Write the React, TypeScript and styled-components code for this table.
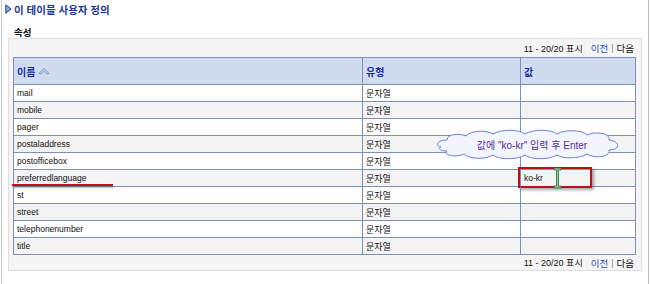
import React from "react";
import styled, { createGlobalStyle } from "styled-components";

const FONT = `"Liberation Sans", "Noto Sans CJK KR", sans-serif`;

const GlobalStyle = createGlobalStyle`
  html, body { margin: 0; padding: 0; background: #ffffff; }
  body { font-family: ${FONT}; color: #000; }
  * { box-sizing: border-box; }
`;

const Page = styled.div`
  width: 650px;
  height: 284px;
  display: flex;
  background: #fff;
`;

const Frame = styled.div`
  margin-left: 1px;
  width: 648px;
  height: 284px;
  border-left: 1px solid #c3cbd8;
  border-right: 1px solid #bdbdbd;
  display: flex;
  flex-direction: column;
`;

const TitleRow = styled.div`
  display: flex;
  align-items: center;
  gap: 2px;
  height: 14px;
  margin: 2px 0 0 3px;
  font: bold 10.5px ${FONT};
  color: #1f3a94;
  white-space: nowrap;
`;

const SectionLabel = styled.div`
  height: 12px;
  line-height: 12px;
  margin: 9px 0 0 12px;
  font: bold 9.5px ${FONT};
  color: #111;
`;

const Panel = styled.div`
  margin: 1px 0 0 6px;
  width: 634px;
  border: 1px solid #dedede;
  background: #f5f5f5;
  padding: 0 5px 0 4px;
  display: flex;
  flex-direction: column;
`;

const Pager = styled.div<{ $h: number }>`
  height: ${(p) => p.$h}px;
  display: flex;
  justify-content: flex-end;
  align-items: center;
  padding-right: 2px;
  color: #111;
  white-space: nowrap;
`;

const PagerCount = styled.span`
  font-size: 9px;
  margin-right: 3px;
`;

const PagerWord = styled.span<{ $link?: boolean }>`
  font-size: 9.5px;
  color: ${(p) => (p.$link ? "#2d4fb3" : "#111")};
`;

const Sep = styled.span`
  color: #8a8a8a;
  font-size: 9px;
  margin: 0 3px;
`;

const Table = styled.div`
  border: 1px solid #7b91b6;
  background: #fff;
  display: flex;
  flex-direction: column;
`;

const Row = styled.div<{ $head?: boolean; $alt?: boolean; $last?: boolean }>`
  display: grid;
  grid-template-columns: 348px 158px 1fr;
  height: ${(p) => (p.$head ? 27 : p.$last ? 16 : 17)}px;
  border-bottom: ${(p) => (p.$last ? "none" : "1px solid #7b91b6")};
  background: ${(p) => (p.$head ? "#cfdbee" : p.$alt ? "#f3f3f3" : "#ffffff")};
`;

const Cell = styled.div<{ $first?: boolean; $kr?: boolean }>`
  position: relative;
  display: flex;
  align-items: center;
  gap: 3px;
  padding-left: 3px;
  border-left: ${(p) => (p.$first ? "none" : "1px solid #7b91b6")};
  font-size: ${(p) => (p.$kr ? 9 : 8.5)}px;
  color: #111;
  white-space: nowrap;
`;

const HeadCell = styled(Cell)`
  font-weight: bold;
  font-size: 10px;
  color: #1b2b9f;
`;

const Underline = styled.div`
  position: absolute;
  left: -2px;
  top: 14px;
  width: 101px;
  height: 2px;
  background: #c0121c;
  box-shadow: 1px 2px 2px rgba(0, 0, 0, 0.3);
`;

const EditBox = styled.div`
  position: absolute;
  left: -3px;
  top: -3px;
  width: 74px;
  height: 21px;
  border: 2px solid #b0141e;
  box-shadow: 2px 2px 3px rgba(0, 0, 0, 0.35);
`;

const Cursor = styled.svg`
  position: absolute;
  left: 32px;
  top: -3px;
`;

const Callout = styled.div`
  position: absolute;
  left: -88px;
  top: -41px;
  width: 188px;
  height: 31px;
  display: flex;
  align-items: center;
  justify-content: center;
  padding-left: 10px;
  font-size: 10px;
  color: #4f3099;
`;

const CloudSvg = styled.svg`
  position: absolute;
  left: 0;
  top: 0;
  z-index: 0;
`;

const CalloutText = styled.span`
  position: relative;
  z-index: 1;
  white-space: nowrap;
`;

const TitleIcon = () => (
  <svg width="7" height="10" viewBox="0 0 7 10">
    <polygon points="0.8,0.8 6.2,5 0.8,9.2" fill="#7fa6e0" stroke="#25418f" strokeWidth="1" />
  </svg>
);

const SortIcon = () => (
  <svg width="12" height="8" viewBox="0 0 12 8">
    <path d="M1 6.5 L6 1.5 L11 6.5 L9 7.2 L6 4.2 L3 7.2 Z" fill="#c3cfe6" stroke="#8090b6" strokeWidth="0.9" />
  </svg>
);

const CloudShape = () => (
  <CloudSvg width="188" height="31" viewBox="0 0 188 31">
    <path
      d="M8 18
         C1 17, 4 11, 14 11
         C14 5, 26 4, 33 7
         C38 1, 54 1, 60 5
         C68 0, 86 0, 92 5
         C100 0, 118 0, 124 5
         C132 0, 150 1, 154 6
         C162 2, 178 4, 176 11
         C187 12, 188 21, 176 21
         C178 28, 162 30, 154 25
         C146 30, 130 30, 124 26
         C116 31, 98 31, 92 26
         C84 31, 66 31, 60 26
         C52 31, 36 30, 31 25
         C22 29, 10 26, 14 22
         C8 22, 4 20, 8 18 Z"
      fill="#f3f5fe"
      stroke="#6880da"
      strokeWidth="1"
    />
  </CloudSvg>
);

const IBeam = () => (
  <Cursor width="9" height="22" viewBox="0 0 9 22">
    <path
      d="M1 1 H8 V3 H5.5 V19 H8 V21 H1 V19 H3.5 V3 H1 Z"
      fill="#7fd08a"
      stroke="#2f6a3a"
      strokeWidth="0.8"
    />
  </Cursor>
);

const rows = [
  "mail",
  "mobile",
  "pager",
  "postaladdress",
  "postofficebox",
  "preferredlanguage",
  "st",
  "street",
  "telephonenumber",
  "title",
];

const PagerContent = ({ h }: { h: number }) => (
  <Pager $h={h}>
    <PagerCount>11 - 20/20 표시</PagerCount>
    <PagerWord $link style={{ marginLeft: 5 }}>이전</PagerWord>
    <Sep>|</Sep>
    <PagerWord>다음</PagerWord>
  </Pager>
);

export default function App() {
  return (
    <Page>
      <GlobalStyle />
      <Frame>
        <TitleRow>
          <TitleIcon />
          <span>이 테이블 사용자 정의</span>
        </TitleRow>
        <SectionLabel>속성</SectionLabel>
        <Panel>
          <PagerContent h={18} />
          <Table>
            <Row $head>
              <HeadCell $first>
                이름 <SortIcon />
              </HeadCell>
              <HeadCell>유형</HeadCell>
              <HeadCell>값</HeadCell>
            </Row>
            {rows.map((name, i) => {
              const hl = name === "preferredlanguage";
              return (
                <Row key={name} $alt={i % 2 === 1} $last={i === rows.length - 1}>
                  <Cell $first>
                    {name}
                    {hl && <Underline />}
                  </Cell>
                  <Cell $kr>문자열</Cell>
                  <Cell>
                    {hl && (
                      <>
                        ko-kr
                        <EditBox />
                        <IBeam />
                        <Callout>
                          <CloudShape />
                          <CalloutText>값에 "ko-kr" 입력 후 Enter</CalloutText>
                        </Callout>
                      </>
                    )}
                  </Cell>
                </Row>
              );
            })}
          </Table>
          <PagerContent h={15} />
        </Panel>
      </Frame>
    </Page>
  );
}
